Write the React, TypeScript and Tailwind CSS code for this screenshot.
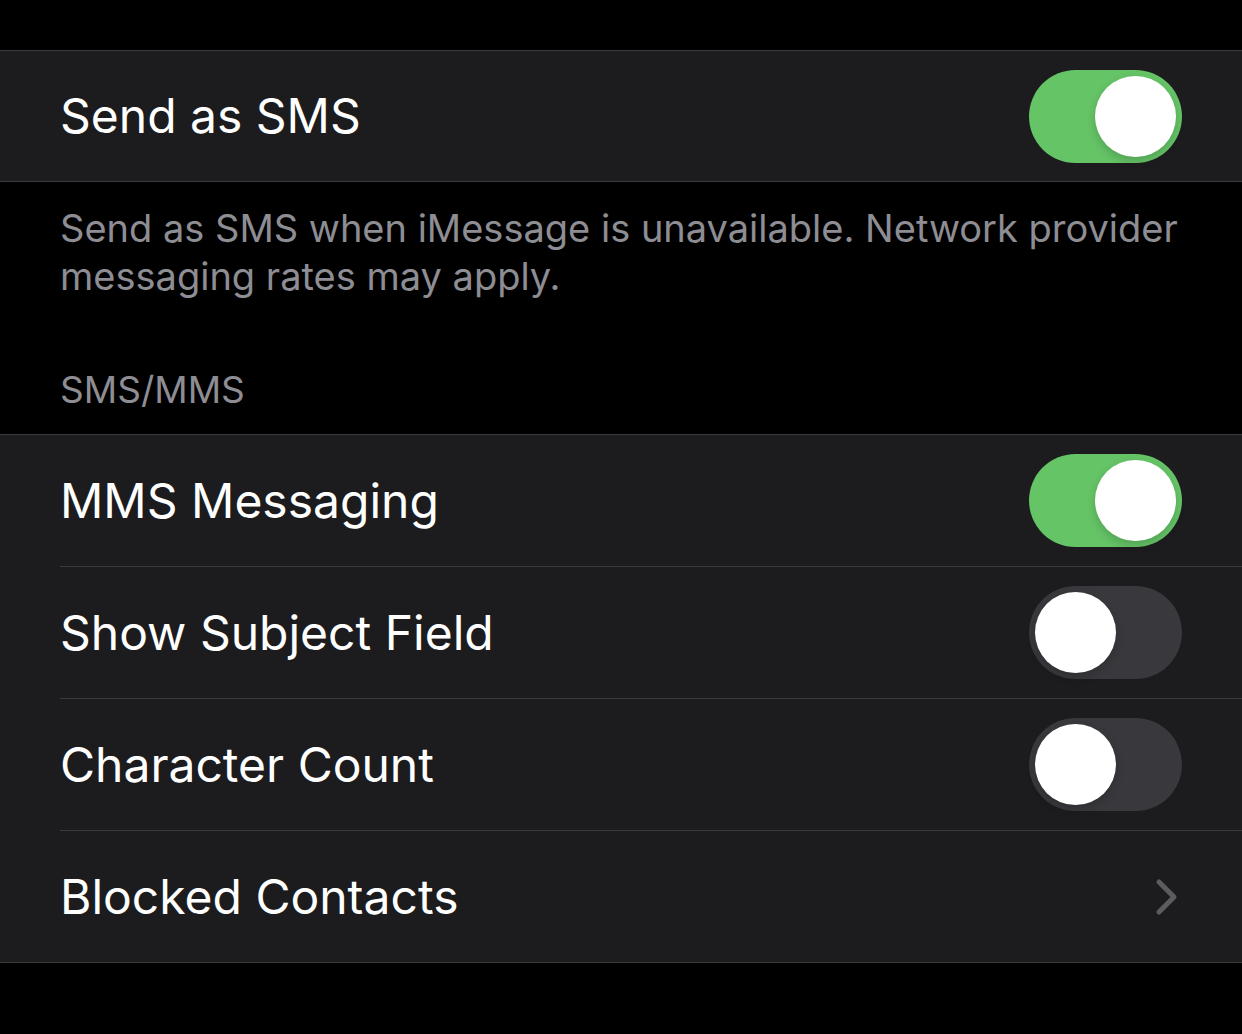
import React from "react";

type Row = {
  label: string;
  kind: "toggle" | "link";
  on?: boolean;
};

const Toggle = ({ on }: { on: boolean }) => (
  <div
    className={`flex h-[93px] w-[153px] items-center rounded-full p-[6px] ${
      on ? "justify-end bg-[#65c466]" : "justify-start bg-[#39393d]"
    }`}
  >
    <div className="h-[81px] w-[81px] rounded-full bg-white shadow-[0_4px_10px_rgba(0,0,0,0.18)]" />
  </div>
);

const Chevron = () => (
  <svg width="26" height="40" viewBox="0 0 26 40" fill="none">
    <path
      d="M5 5 L20 20 L5 35"
      stroke="#5b5b60"
      strokeWidth="5"
      strokeLinecap="round"
      strokeLinejoin="round"
    />
  </svg>
);

const SettingRow = ({
  row,
  last,
  height,
}: {
  row: Row;
  last: boolean;
  height: string;
}) => (
  <div className="flex flex-col pl-[60px]">
    <div className={`flex ${height} items-center justify-between pr-[60px]`}>
      <span className="text-[48px] text-white">{row.label}</span>
      {row.kind === "toggle" ? (
        <Toggle on={!!row.on} />
      ) : (
        <div className="pr-[2px]">
          <Chevron />
        </div>
      )}
    </div>
    {!last && <div className="h-px bg-[#3a3a3d]" />}
  </div>
);

const Group = ({ rows, height }: { rows: Row[]; height: string }) => (
  <div className="border-y border-[#3a3a3d] bg-[#1c1c1e]">
    {rows.map((r, i) => (
      <SettingRow
        key={r.label}
        row={r}
        height={height}
        last={i === rows.length - 1}
      />
    ))}
  </div>
);

export default function App() {
  const sms: Row[] = [{ label: "Send as SMS", kind: "toggle", on: true }];
  const mms: Row[] = [
    { label: "MMS Messaging", kind: "toggle", on: true },
    { label: "Show Subject Field", kind: "toggle", on: false },
    { label: "Character Count", kind: "toggle", on: false },
    { label: "Blocked Contacts", kind: "link" },
  ];

  return (
    <div
      className="h-[1034px] w-[1242px] overflow-hidden bg-black pt-[50px]"
      style={{ fontFamily: "Inter, 'Noto Sans', sans-serif" }}
    >
      <Group rows={sms} height="h-[130px]" />
      <p className="px-[60px] pt-[22px] text-[38px] leading-[48px] text-[#8d8d93]">
        Send as SMS when iMessage is unavailable. Network provider messaging
        rates may apply.
      </p>
      <div className="px-[60px] pb-[20px] pt-[66px] text-[37px] leading-[48px] text-[#8d8d93]">
        SMS/MMS
      </div>
      <Group rows={mms} height="h-[131px]" />
    </div>
  );
}
